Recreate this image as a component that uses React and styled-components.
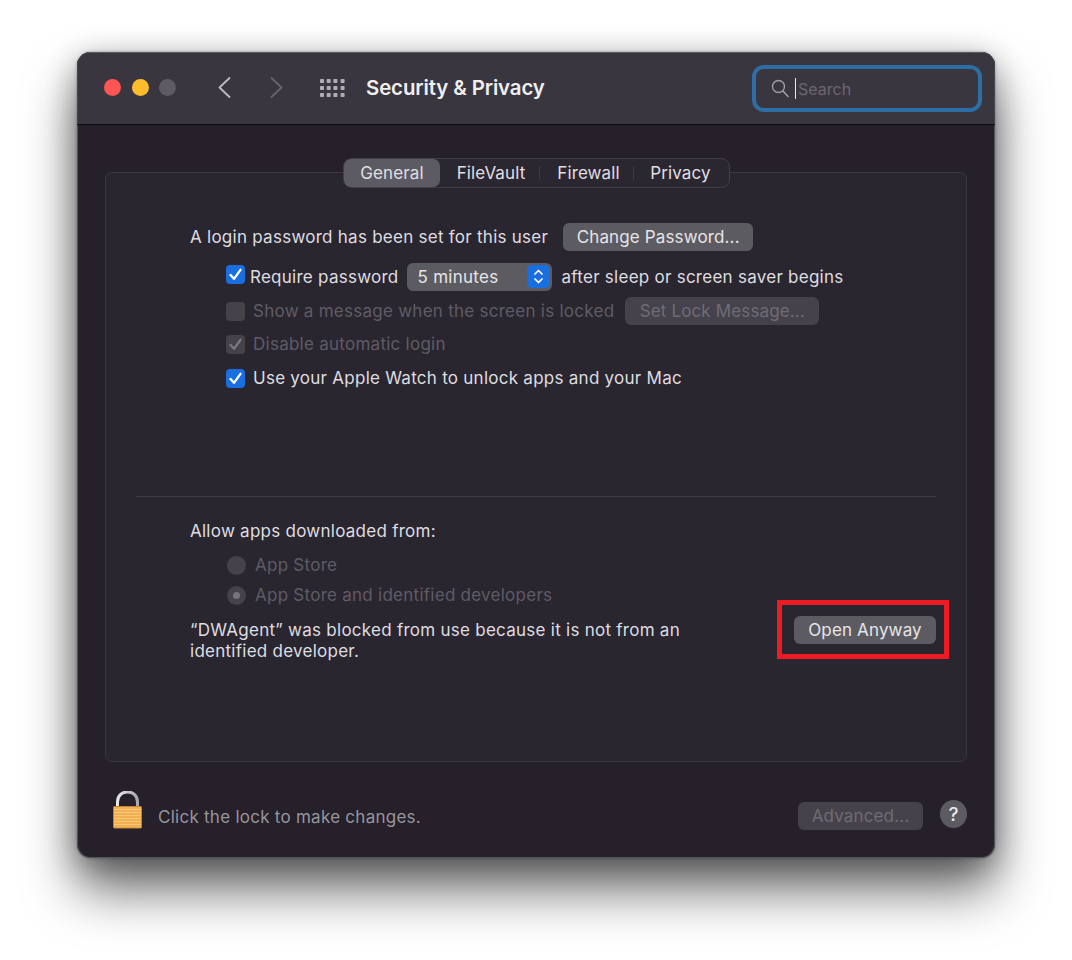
import React from "react";
import styled, { createGlobalStyle } from "styled-components";

const Global = createGlobalStyle`
  html, body { margin: 0; padding: 0; background: #fff; }
  body { font-family: Inter, "Liberation Sans", sans-serif; -webkit-font-smoothing: antialiased; }
`;
const Page = styled.div`
  width: 1072px; height: 960px; box-sizing: border-box; padding: 52px 0 0 77px; overflow: hidden; background: #fff;
`;
const Win = styled.div`
  width: 918px; height: 806px; box-sizing: border-box; border-radius: 14px; background: #25202a;
  display: flex; flex-direction: column; overflow: hidden;
  box-shadow: inset 0 0 0 1px #56535a, 0 0 3px rgba(0,0,0,.35), 0 32px 52px rgba(0,0,0,.58), 0 6px 30px rgba(0,0,0,.3);
`;
const TitleBar = styled.div`
  height: 73px; flex: none; box-sizing: border-box; background: #3a3640; border-bottom: 1px solid #0e0c10;
  box-shadow: inset 0 1px 0 #5d5a60, inset 1px 0 0 #4a474e, inset -1px 0 0 #4a474e;
  display: flex; align-items: center; padding: 0 13px 0 27px;
`;
const Lights = styled.div`display: flex; gap: 10.5px; margin-top: -1px;`;
const Light = styled.span`width: 17px; height: 17px; border-radius: 50%; background: ${p => p.$c};`;
const NavIcon = styled.svg`display: block; flex: none; margin-left: ${p => p.$ml}px; margin-top: -1px;`;
const Title = styled.div`
  margin-left: 21px; color: #f0eff0; font-weight: 600; font-size: 20.4px; letter-spacing: -0.1px; margin-top: -1px;
`;
const SearchBox = styled.div`
  margin-left: auto; width: 230px; height: 47px; box-sizing: border-box; border: 4px solid #2e6ea6; border-radius: 12px;
  display: flex; align-items: center; padding-left: 15px; margin-top: 1px;
`;
const Caret = styled.span`width: 1px; height: 21px; background: #e8e8e8; margin-left: 6px;`;
const Placeholder = styled.span`color: #6a6770; font-size: 16px; margin-left: 2px;`;
const Body = styled.div`
  flex: 1; display: flex; flex-direction: column; padding: 33px 28px 0 28px; min-height: 0;
`;
const TabBar = styled.div`
  align-self: center; display: flex; align-items: center; height: 30px; box-sizing: border-box; position: relative; z-index: 1;
  background: #2b2731; border: 1px solid #423f47; border-radius: 9px; margin-bottom: -16px;
`;
const Tab = styled.div`
  height: 28px; display: flex; align-items: center; justify-content: center; width: ${p => p.$w}px; box-sizing: border-box;
  padding: ${p => p.$pad || "0"};
  font-size: 17px; letter-spacing: 0.1px; color: #e0dfe1; border-radius: 7px; position: relative;
  background: ${p => p.$active ? "#5c5a62" : "transparent"};
  ${p => p.$sep && `&::after { content: ""; position: absolute; right: 0; top: 7px; height: 14px; width: 1px; background: #3d3a42; }`}
`;
const Panel = styled.div`
  height: 590px; flex: none; box-sizing: border-box; background: #2a2630; border: 1px solid #3b3841; border-radius: 7px;
  padding: 49px 0 0 0; display: flex; flex-direction: column;
`;
const Section = styled.div`display: flex; flex-direction: column; padding-left: 84px;`;
const Row = styled.div`
  height: ${p => p.$h}px; flex: none; display: flex; align-items: center; margin-top: ${p => p.$mt || 0}px;
  padding-left: ${p => p.$pl || 0}px;
`;
const Label = styled.span`
  font-size: 17px; letter-spacing: 0.26px; white-space: nowrap; margin-left: ${p => p.$ml || 0}px;
  color: ${p => p.$off ? "#5f5c65" : "#dfdde0"};
`;
const Box = styled.span`
  width: 19px; height: 19px; flex: none; border-radius: 4px; display: flex; align-items: center; justify-content: center;
  margin-top: ${p => p.$mt || 0}px; background: ${p => p.$on ? "#1a6fe0" : "#45424a"};
`;
const Btn = styled.div`
  height: 28px; box-sizing: border-box; display: flex; align-items: center; justify-content: center; flex: none;
  width: ${p => p.$w}px; border-radius: 6px; font-size: 17px; letter-spacing: 0.14px;
  margin-left: ${p => p.$ml || 0}px; margin-top: ${p => p.$mt || 0}px;
  background: ${p => p.$off ? "#45424b" : "#5d5b62"}; color: ${p => p.$off ? "#6f6c75" : "#e6e5e7"};
`;
const Select = styled.div`
  width: 145px; height: 28px; box-sizing: border-box; margin: -1px 10px 0 8px; background: #5d5b62; border-radius: 6px; color: #e6e5e7;
  font-size: 17px; letter-spacing: 0.26px; display: flex; align-items: center; justify-content: space-between; padding: 0 2px 0 11px;
`;
const Stepper = styled.span`
  width: 23px; height: 23px; background: #1a6fe0; border-radius: 5px; display: flex; align-items: center; justify-content: center;
`;
const Divider = styled.div`height: 1px; background: #3f3c45; margin: 100px 30px 0 30px; flex: none;`;
const Radio = styled.span`
  width: 19px; height: 19px; border-radius: 50%; background: #45424a; flex: none; display: flex; align-items: center; justify-content: center;
  &::after { content: ""; display: ${p => p.$on ? "block" : "none"}; width: 7px; height: 7px; border-radius: 50%; background: #77747c; }
`;
const Blocked = styled.div`
  display: flex; justify-content: space-between; align-items: flex-start; height: 59px; margin-top: -10px; padding-right: 17px; flex: none;
`;
const BlockedText = styled.p`
  margin: 20px 0 0; font-size: 17px; line-height: 21px; width: 530px; color: #dfdde0; letter-spacing: 0.26px;
`;
const Highlight = styled.div`
  width: 172px; height: 59px; box-sizing: border-box; border: 5px solid #ed1c24; display: flex; align-items: center; justify-content: center; padding-left: 4px; flex: none;
`;
const Footer = styled.div`flex: 1; display: flex; align-items: center; padding-left: 8px;`;
const FootText = styled.span`font-size: 17px; color: #98959d; margin-left: 15px; margin-top: 13px; letter-spacing: 0.26px;`;
const Help = styled.div`
  width: 27px; height: 28px; border-radius: 50%; background: #5d5b62; color: #e8e7e9; font-size: 19px; font-weight: 500;
  display: flex; align-items: center; justify-content: center; margin-left: 17px; margin-top: 8px;
`;
const Spacer = styled.div`flex: 1;`;

const Check = ({ c = "#fff" }) => (
  <svg width="15" height="15" viewBox="0 0 15 15"><path d="M2.5 8 L6 11.8 L12.5 2.8" fill="none" stroke={c} strokeWidth="2.3" strokeLinecap="round" strokeLinejoin="round" /></svg>
);
const Dots = () => (
  <NavIcon $ml={37} width="25" height="18" viewBox="0 0 25 18">
    {[2, 9, 16].map(y => [2, 8.7, 15.4, 22.6].map(x => <rect key={`${x}-${y}`} x={x - 2} y={y - 2} width="4" height="4" rx="0.8" fill="#b0aeb3" />))}
  </NavIcon>
);

export default function App() {
  return (
    <Page>
      <Global />
      <Win>
        <TitleBar>
          <Lights>
            <Light $c="#fc5753" /><Light $c="#fdbc2c" /><Light $c="#5e5c62" />
          </Lights>
          <NavIcon $ml={42} width="13" height="21" viewBox="0 0 13 21"><path d="M11.5 1 L1.5 10.5 L11.5 20" fill="none" stroke="#bdbbc0" strokeWidth="1.8" strokeLinecap="round" strokeLinejoin="round" /></NavIcon>
          <NavIcon $ml={39} width="13" height="21" viewBox="0 0 13 21"><path d="M1.5 1 L11.5 10.5 L1.5 20" fill="none" stroke="#67646b" strokeWidth="1.8" strokeLinecap="round" strokeLinejoin="round" /></NavIcon>
          <Dots />
          <Title>Security &amp; Privacy</Title>
          <SearchBox>
            <svg width="18" height="19" viewBox="0 0 18 19"><circle cx="7.5" cy="7.5" r="6" fill="none" stroke="#a09ea4" strokeWidth="1.4" /><path d="M12 12 L17 17.5" stroke="#a09ea4" strokeWidth="1.6" strokeLinecap="round" /></svg>
            <Caret />
            <Placeholder>Search</Placeholder>
          </SearchBox>
        </TitleBar>
        <Body>
          <TabBar>
            <Tab $active $w={96} $pad="0 0 0 1px">General</Tab>
            <Tab $w={100} $sep $pad="0 0 0 3px">FileVault</Tab>
            <Tab $w={94} $sep $pad="0 0 0 4px">Firewall</Tab>
            <Tab $w={95} $pad="0 1px 0 0">Privacy</Tab>
          </TabBar>
          <Panel>
            <Section>
              <Row $h={30}>
                <Label>A login password has been set for this user</Label>
                <Btn $w={190} $ml={15}>Change Password...</Btn>
              </Row>
              <Row $h={34} $mt={8} $pl={36}>
                <Box $on $mt={-6}><Check /></Box>
                <Label $ml={5}>Require password</Label>
                <Select>5 minutes
                  <Stepper>
                    <svg width="11" height="17" viewBox="0 0 11 17"><path d="M2 6 L5.5 2.5 L9 6 M2 11 L5.5 14.5 L9 11" fill="none" stroke="#fff" strokeWidth="1.7" strokeLinecap="round" strokeLinejoin="round" /></svg>
                  </Stepper>
                </Select>
                <Label>after sleep or screen saver begins</Label>
              </Row>
              <Row $h={34} $pl={36}>
                <Box />
                <Label $off $ml={8}>Show a message when the screen is locked</Label>
                <Btn $off $w={194} $ml={11}>Set Lock Message...</Btn>
              </Row>
              <Row $h={32} $pl={36}>
                <Box><Check c="#7c7981" /></Box>
                <Label $off $ml={8}>Disable automatic login</Label>
              </Row>
              <Row $h={36} $pl={36}>
                <Box $on><Check /></Box>
                <Label $ml={8}>Use your Apple Watch to unlock apps and your Mac</Label>
              </Row>
            </Section>
            <Divider />
            <Section>
              <Row $h={24} $mt={22}>
                <Label>Allow apps downloaded from:</Label>
              </Row>
              <Row $h={30} $mt={7} $pl={37}>
                <Radio />
                <Label $off $ml={9}>App Store</Label>
              </Row>
              <Row $h={30} $pl={37}>
                <Radio $on />
                <Label $off $ml={9}>App Store and identified developers</Label>
              </Row>
              <Blocked>
                <BlockedText>“DWAgent” was blocked from use because it is not from an identified developer.</BlockedText>
                <Highlight><Btn $w={142}>Open Anyway</Btn></Highlight>
              </Blocked>
            </Section>
          </Panel>
          <Footer>
            <svg width="30" height="38" viewBox="0 0 30 38" style={{ flex: "none" }}>
              <defs>
                <linearGradient id="sh" x1="0" x2="1" y1="0" y2="0"><stop offset="0" stopColor="#e8e8ea" /><stop offset="1" stopColor="#a8a8ae" /></linearGradient>
                <pattern id="st" width="30" height="3" patternUnits="userSpaceOnUse"><rect width="30" height="3" fill="#f3b053" /><rect width="30" height="1" fill="#fbc877" /></pattern>
              </defs>
              <path d="M4.5 17 V11 C4.5 -2.5 24.5 -2.5 24.5 11 V17" fill="none" stroke="url(#sh)" strokeWidth="3" />
              <rect x="0.5" y="15.5" width="28" height="21.5" rx="1" fill="url(#st)" stroke="#c9822c" strokeWidth="1" />
            </svg>
            <FootText>Click the lock to make changes.</FootText>
            <Spacer />
            <Btn $off $w={125} $mt={11}>Advanced...</Btn>
            <Help>?</Help>
          </Footer>
        </Body>
      </Win>
    </Page>
  );
}
